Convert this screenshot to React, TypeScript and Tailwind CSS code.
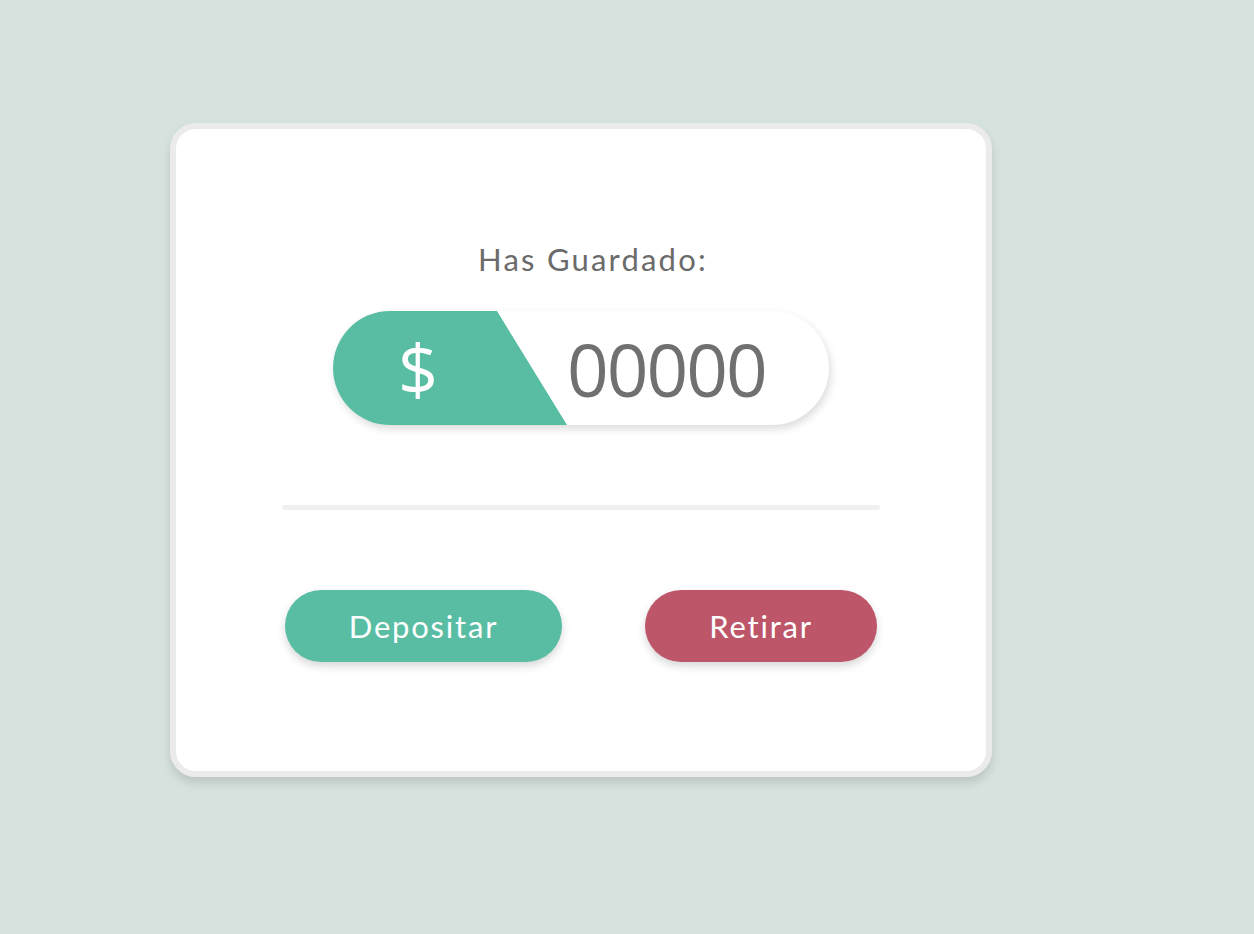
import React from 'react';

const App = () => {
  const amount = '00000';

  return (
    <div className="min-h-screen w-full bg-[#d6e2de] pl-[170px] pt-[123px]" style={{ fontFamily: 'Lato, "Noto Sans", sans-serif' }}>
      {/* Tarjeta principal */}
      <div className="w-[822px] h-[654px] rounded-[26px] border-[6px] border-[#ebebeb] bg-white shadow-[0_6px_10px_rgba(0,0,0,0.12)] flex flex-col items-center pt-[112px]">
        <p className="text-[31px] leading-[36px] tracking-[2.2px] text-[#6b6b6b] ml-[24px]">Has Guardado:</p>

        {/* Saldo */}
        <div className="mt-[34px] w-[496px] h-[114px] rounded-full bg-white overflow-hidden flex items-center shadow-[2px_4px_8px_rgba(0,0,0,0.14)]">
          <div className="h-full w-[234px] bg-[#59bda3] [clip-path:polygon(0_0,164px_0,234px_100%,0_100%)] flex items-center pl-[65px]">
            <span className="text-white text-[70px] leading-none" style={{ fontFamily: '"Open Sans", sans-serif' }}>$</span>
          </div>
          <span className="text-[#707070] text-[73px] leading-none tracking-[-2px]" style={{ fontFamily: '"Open Sans", sans-serif' }}>
            {amount}
          </span>
        </div>

        {/* Separador */}
        <div className="mt-[80px] w-[598px] h-[5px] rounded-full bg-[#f0f0f0]" />

        {/* Botones */}
        <div className="mt-[80px] w-[592px] flex justify-between">
          <button
            type="button"
            className="w-[277px] h-[72px] rounded-full bg-[#59bda3] text-white text-[31px] tracking-[1.8px] shadow-[0_4px_8px_rgba(0,0,0,0.16)]"
          >
            Depositar
          </button>
          <button
            type="button"
            className="w-[232px] h-[72px] rounded-full bg-[#bd5668] text-white text-[31px] tracking-[1.8px] shadow-[0_4px_8px_rgba(0,0,0,0.16)]"
          >
            Retirar
          </button>
        </div>
      </div>
    </div>
  );
};

export default App;
